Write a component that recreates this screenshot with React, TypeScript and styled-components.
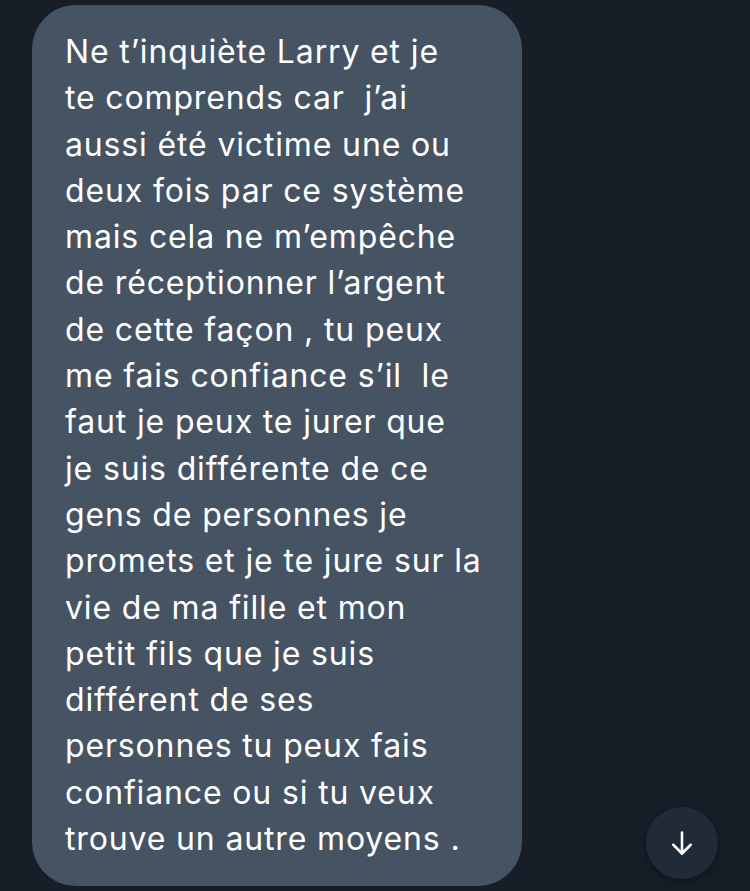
import React from 'react'
import styled, { createGlobalStyle } from 'styled-components'

const GlobalStyle = createGlobalStyle`
  html, body {
    margin: 0;
    padding: 0;
    background: #171e28;
  }
  #root {
    height: 891px;
  }
`

const lines = [
  'Ne t’inquiète Larry et je',
  'te comprends car  j’ai',
  'aussi été victime une ou',
  'deux fois par ce système',
  'mais cela ne m’empêche',
  'de réceptionner l’argent',
  'de cette façon , tu peux',
  'me fais confiance s’il  le',
  'faut je peux te jurer que',
  'je suis différente de ce',
  'gens de personnes je',
  'promets et je te jure sur la',
  'vie de ma fille et mon',
  'petit fils que je suis',
  'différent de ses',
  'personnes tu peux fais',
  'confiance ou si tu veux',
  'trouve un autre moyens .',
]

const Screen = styled.div`
  position: relative;
  width: 750px;
  height: 891px;
  overflow: hidden;
  background: #171e28;
  padding: 5px 0 0 32px;
  box-sizing: border-box;
`

const Bubble = styled.div`
  width: 490px;
  box-sizing: border-box;
  padding: 24px 10px 24px 33px;
  background: #465363;
  border-radius: 44px;
  color: #ffffff;
  font-family: Inter, 'Noto Sans', sans-serif;
  font-size: 32px;
  letter-spacing: 0.85px;
  line-height: 46.3px;
`

const Line = styled.span`
  display: block;
  white-space: pre;
`

// floating "scroll to bottom" button over the conversation
const ScrollButton = styled.button`
  position: absolute;
  left: 646px;
  top: 807px;
  width: 72px;
  height: 72px;
  border-radius: 50%;
  border: none;
  padding: 0;
  background: #212b38;
  box-shadow: 0 2px 8px rgba(0, 0, 0, 0.35);
  display: flex;
  align-items: center;
  justify-content: center;
  color: #ffffff;
`

export default function App() {
  return (
    <>
      <GlobalStyle />
      <Screen>
        <Bubble>
          {lines.map((l, i) => (
            <Line key={i}>{l}</Line>
          ))}
        </Bubble>
        <ScrollButton aria-label="Défiler vers le bas">
          <svg width="28" height="28" viewBox="0 0 24 24" fill="none" stroke="currentColor" strokeWidth="2.2" strokeLinecap="round" strokeLinejoin="round">
            <path d="M12 3v18" />
            <path d="M4.5 13.5 12 21l7.5-7.5" />
          </svg>
        </ScrollButton>
      </Screen>
    </>
  )
}
